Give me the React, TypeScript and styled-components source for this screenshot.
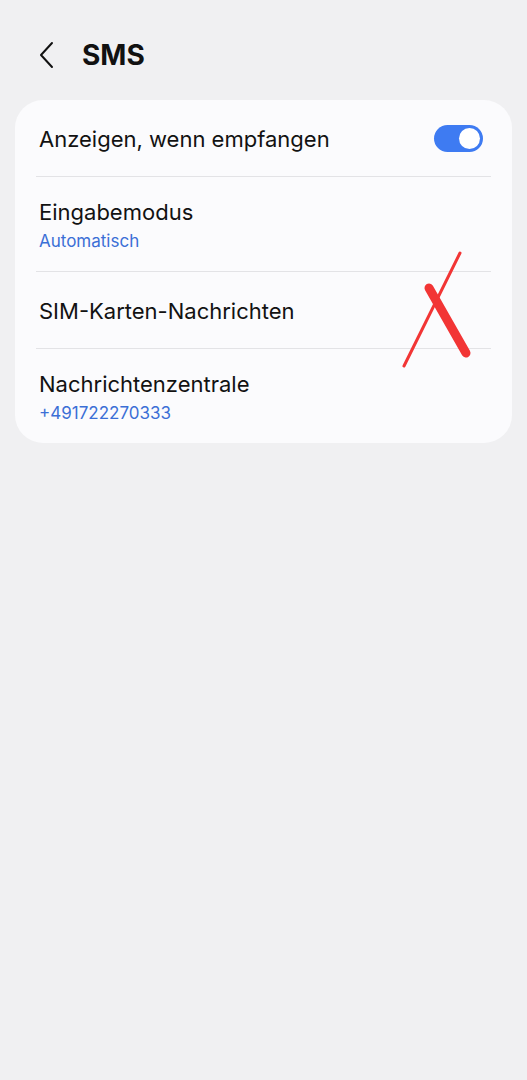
import React, {useState} from 'react';
import styled, {createGlobalStyle} from 'styled-components';

const GlobalStyle = createGlobalStyle`
  html, body {
    margin: 0;
    padding: 0;
    background: #f0f0f2;
  }
  body {
    font-family: Inter, Roboto, "Noto Sans", sans-serif;
    color: #111;
  }
`;

const Screen = styled.div`
  position: relative;
  width: 527px;
  min-height: 1080px;
  background: #f0f0f2;
`;

const Header = styled.div`
  display: flex;
  align-items: center;
  height: 100px;
  padding: 10px 0 0 34px;
  box-sizing: border-box;
  gap: 22px;
`;

const BackButton = styled.button`
  display: flex;
  align-items: center;
  justify-content: center;
  width: 26px;
  height: 30px;
  padding: 0;
  border: none;
  background: none;
  cursor: pointer;
`;

const Title = styled.h1`
  margin: 0;
  font-size: 28px;
  font-weight: 700;
  color: #111;
`;

const Card = styled.div`
  margin: 0 15px;
  background: #fbfbfd;
  border-radius: 28px;
  overflow: hidden;
`;

const Row = styled.div<{ $tall?: boolean }>`
  display: flex;
  align-items: ${p => (p.$tall ? 'flex-start' : 'center')};
  justify-content: space-between;
  box-sizing: border-box;
  height: ${p => (p.$tall ? '94px' : '76px')};
  padding: ${p => (p.$tall ? '21px 24px 0' : '1px 24px 0')};
`;

const Divider = styled.div`
  height: 1px;
  margin: 0 21px;
  background: #e3e3e6;
`;

const TextBlock = styled.div`
  display: flex;
  flex-direction: column;
`;

const Label = styled.span`
  font-size: 22px;
  line-height: 28px;
  color: #121212;
`;

const Sub = styled.span`
  margin-top: 4px;
  font-size: 17px;
  line-height: 22px;
  color: #3b6fd6;
`;

const Switch = styled.button<{ $on: boolean }>`
  position: relative;
  width: 49px;
  height: 27px;
  padding: 0;
  border: none;
  border-radius: 14px;
  background: ${p => (p.$on ? '#3e7bf2' : '#c4c4c8')};
  cursor: pointer;
  margin-right: 5px;

  &::after {
    content: '';
    position: absolute;
    top: 3px;
    left: ${p => (p.$on ? '25px' : '3px')};
    width: 21px;
    height: 21px;
    border-radius: 50%;
    background: #fff;
  }
`;

const Scribble = styled.svg`
  position: absolute;
  left: 398px;
  top: 248px;
  pointer-events: none;
`;

export default function App() {
    const [show, setShow] = useState(true);

    return (
        <Screen>
            <GlobalStyle />
            <Header>
                <BackButton aria-label="Zurück">
                    <svg width="18" height="28" viewBox="0 0 18 28">
                        <path d="M14 2 L3 14 L14 26" fill="none" stroke="#111" strokeWidth="2" strokeLinecap="round" strokeLinejoin="round" />
                    </svg>
                </BackButton>
                <Title>SMS</Title>
            </Header>
            <Card>
                <Row>
                    <Label>Anzeigen, wenn empfangen</Label>
                    <Switch $on={show} onClick={() => setShow(!show)} aria-label="Anzeigen" />
                </Row>
                <Divider />
                <Row $tall>
                    <TextBlock>
                        <Label>Eingabemodus</Label>
                        <Sub>Automatisch</Sub>
                    </TextBlock>
                </Row>
                <Divider />
                <Row>
                    <Label>SIM-Karten-Nachrichten</Label>
                </Row>
                <Divider />
                <Row $tall>
                    <TextBlock>
                        <Label>Nachrichtenzentrale</Label>
                        <Sub>+491722270333</Sub>
                    </TextBlock>
                </Row>
            </Card>
            {/* red hand-drawn cross over the SIM row */}
            <Scribble width="80" height="125" viewBox="0 0 80 125">
                <path d="M62 5 L6 118" stroke="#f23535" strokeWidth="3" strokeLinecap="round" fill="none" />
                <path d="M31 40 L68 105" stroke="#f23535" strokeWidth="9" strokeLinecap="round" fill="none" />
            </Scribble>
        </Screen>
    );
}
